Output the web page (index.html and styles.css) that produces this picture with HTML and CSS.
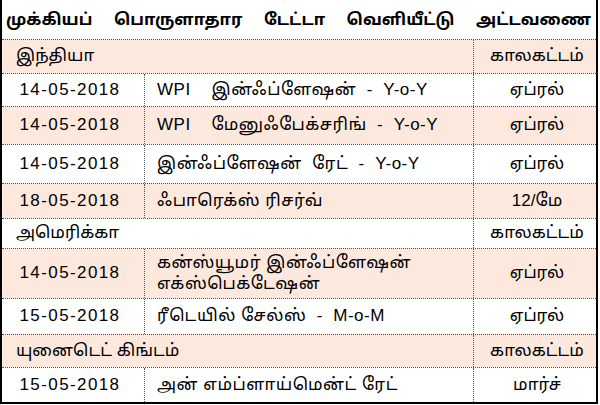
FILE: index.html
```html
<!DOCTYPE html>
<html lang="ta">
<head>
<meta charset="utf-8">
<title>முக்கியப் பொருளாதார டேட்டா வெளியீட்டு அட்டவணை</title>
<link rel="stylesheet" href="styles.css">
</head>
<body>
<div class="sheet">
  <div class="row title-row">
    <h1 class="title"><span>முக்கியப்</span> <span>பொருளாதார</span> <span>டேட்டா</span> <span>வெளியீட்டு</span> <span>அட்டவணை</span></h1>
  </div>

  <div class="row cat peach r-india">
    <div class="cell country">இந்தியா</div>
    <div class="cell period">காலகட்டம்</div>
  </div>
  <div class="row r1">
    <div class="cell date">14-05-2018</div>
    <div class="cell event">WPI&nbsp;&nbsp;&nbsp; இன்ஃப்ளேஷன்&nbsp; -&nbsp; Y-o-Y</div>
    <div class="cell period">ஏப்ரல்</div>
  </div>
  <div class="row peach r2">
    <div class="cell date">14-05-2018</div>
    <div class="cell event">WPI&nbsp;&nbsp;&nbsp; மேனுஃபேக்சரிங்&nbsp; -&nbsp; Y-o-Y</div>
    <div class="cell period">ஏப்ரல்</div>
  </div>
  <div class="row r3">
    <div class="cell date">14-05-2018</div>
    <div class="cell event">இன்ஃப்ளேஷன்&nbsp; ரேட்&nbsp; -&nbsp; Y-o-Y</div>
    <div class="cell period">ஏப்ரல்</div>
  </div>
  <div class="row peach r4">
    <div class="cell date">18-05-2018</div>
    <div class="cell event">ஃபாரெக்ஸ் ரிசர்வ்</div>
    <div class="cell period">12/மே</div>
  </div>

  <div class="row cat r-us">
    <div class="cell country">அமெரிக்கா</div>
    <div class="cell period">காலகட்டம்</div>
  </div>
  <div class="row peach r5">
    <div class="cell date">14-05-2018</div>
    <div class="cell event">கன்ஸ்யூமர் இன்ஃப்ளேஷன்<br>எக்ஸ்பெக்டேஷன்</div>
    <div class="cell period">ஏப்ரல்</div>
  </div>
  <div class="row r6">
    <div class="cell date">15-05-2018</div>
    <div class="cell event">ரீடெயில் சேல்ஸ்&nbsp; -&nbsp; M-o-M</div>
    <div class="cell period">ஏப்ரல்</div>
  </div>

  <div class="row cat peach r-uk">
    <div class="cell country">யுனைடெட் கிங்டம்</div>
    <div class="cell period">காலகட்டம்</div>
  </div>
  <div class="row r7">
    <div class="cell date">15-05-2018</div>
    <div class="cell event">அன் எம்ப்ளாய்மென்ட் ரேட்</div>
    <div class="cell period">மார்ச்</div>
  </div>
</div>
</body>
</html>
```

FILE: styles.css
```css
html, body {
  margin: 0;
  padding: 0;
  background: #fff;
}

body {
  font-family: "Liberation Sans", "Noto Sans Tamil", "Lohit Tamil", "Noto Sans", sans-serif;
  color: #000;
  font-size: 17px;
}

.sheet {
  box-sizing: border-box;
  width: 598px;
  border-left: 2px solid #000;
  border-right: 2px solid #000;
  border-bottom: 2px solid #000;
}

.row {
  box-sizing: border-box;
  display: grid;
  grid-template-columns: 142px 329px 1fr;
  border-top: 1px dotted #555;
  height: 35px;
}

.peach {
  background: #fce8dd;
}

.title-row {
  display: block;
  border-top: none;
  height: 39px;
}

.title {
  margin: 0;
  font-size: 16.5px;
  font-weight: 700;
  line-height: 39px;
  padding: 0 5px 0 4px;
  white-space: nowrap;
  display: flex;
  justify-content: space-between;
}

.cell {
  display: flex;
  align-items: center;
  box-sizing: border-box;
  line-height: 1.2;
}

.date {
  justify-content: center;
  letter-spacing: 1.4px;
  padding-right: 6px;
}

.event {
  border-left: 1px dotted #555;
  padding-left: 12px;
  letter-spacing: 0.5px;
}

.period {
  border-left: 1px dotted #555;
  justify-content: center;
  padding-left: 4px;
}

.cat .country {
  grid-column: 1 / 3;
  padding-left: 14px;
}

.r-india { height: 34px; }
.r1 { height: 33px; }
.r2 { height: 38px; }
.r3 { height: 39px; }
.r4 { height: 35px; }
.r-us { height: 30px; }
.r5 { height: 50px; }
.r6 { height: 36px; }
.r-uk { height: 33px; }
.r7 { height: 35px; }
```
